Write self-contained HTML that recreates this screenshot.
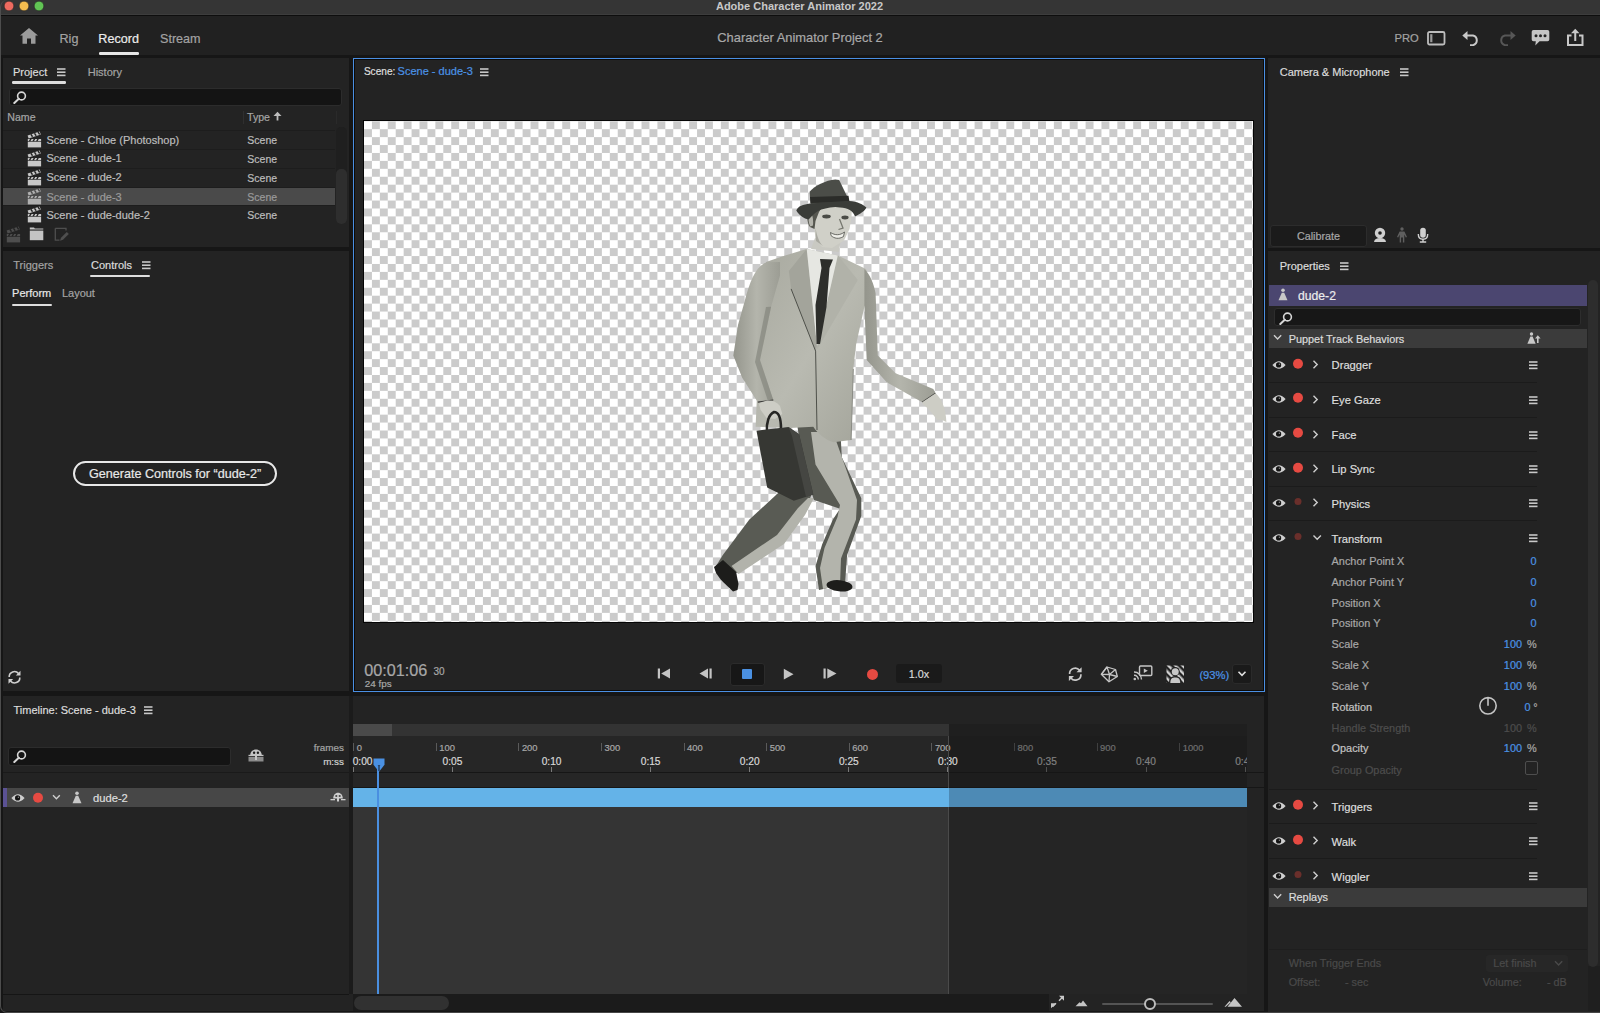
<!DOCTYPE html><html><head><meta charset="utf-8"><style>
html,body{margin:0;padding:0;}
body{width:1600px;height:1013px;overflow:hidden;position:relative;background:#161616;font-family:"Liberation Sans",sans-serif;}
.t{position:absolute;white-space:pre;-webkit-text-stroke:0.2px currentColor;}
.r{position:absolute;}
</style></head><body><div class="r" style="left:0px;top:0px;width:1600.00px;height:1013.00px;background:#161616;"></div><div class="r" style="left:0px;top:0px;width:1600.00px;height:15.00px;background:#353535;"></div><div class="r" style="left:0px;top:14px;width:1600.00px;height:1.00px;background:#3d3d3d;"></div><div class="r" style="left:0px;top:15px;width:1600.00px;height:1.00px;background:#0e0e0e;"></div><svg class="r" style="left:3.3000000000000007px;top:0.3px;" width="12" height="12" viewBox="0 0 12 12"><circle cx="6" cy="6" r="4.8" fill="#ee6a5f" stroke="#1f1f1f" stroke-width="0.5"/></svg><svg class="r" style="left:18.3px;top:0.3px;" width="12" height="12" viewBox="0 0 12 12"><circle cx="6" cy="6" r="4.8" fill="#f5bd4f" stroke="#1f1f1f" stroke-width="0.5"/></svg><svg class="r" style="left:33.3px;top:0.3px;" width="12" height="12" viewBox="0 0 12 12"><circle cx="6" cy="6" r="4.8" fill="#61c454" stroke="#1f1f1f" stroke-width="0.5"/></svg><div class="t" style="left:799.50px;top:0.79px;font-size:11px;line-height:11px;color:#c8c8c8;font-weight:700;transform:translateX(-50%);-webkit-text-stroke:0;">Adobe Character Animator 2022</div><div class="r" style="left:1px;top:16px;width:1599.00px;height:39.00px;background:#212121;"></div><svg class="r" style="left:19px;top:27px;" width="20" height="18" viewBox="0 0 20 18"><path d="M1 8.5 L10 1 L19 8.5 L16.5 8.5 L16.5 16.8 L12 16.8 L12 11.5 L8 11.5 L8 16.8 L3.5 16.8 L3.5 8.5 Z" fill="#9b9b9b"/></svg><div class="t" style="left:59.50px;top:33.33px;font-size:12.6px;line-height:12.6px;color:#a3a3a3;">Rig</div><div class="t" style="left:98.30px;top:33.33px;font-size:12.6px;line-height:12.6px;color:#ececec;">Record</div><div class="r" style="left:99px;top:52px;width:40.00px;height:2.50px;background:#e6e6e6;border-radius:1.2px;"></div><div class="t" style="left:160.00px;top:33.33px;font-size:12.6px;line-height:12.6px;color:#a3a3a3;">Stream</div><div class="t" style="left:800.00px;top:32.18px;font-size:12.9px;line-height:12.9px;color:#a9a9a9;transform:translateX(-50%);">Character Animator Project 2</div><div class="t" style="left:1394.50px;top:32.72px;font-size:11.2px;line-height:11.2px;color:#a3a3a3;">PRO</div><svg class="r" style="left:1427px;top:31px;" width="19" height="15" viewBox="0 0 19 15"><rect x="1" y="1" width="16.5" height="12.5" rx="1.5" fill="none" stroke="#bdbdbd" stroke-width="1.8"/><rect x="3.2" y="3.2" width="2.2" height="8" fill="#9a9a9a"/></svg><svg class="r" style="left:1461px;top:30px;" width="21" height="16" viewBox="0 0 21 16"><path d="M3 5.5 H12 A5 5 0 0 1 12 15.2 H9" fill="none" stroke="#c8c8c8" stroke-width="2"/><path d="M1.3 5.5 L6.5 1 L6.5 10 Z" fill="#c8c8c8"/></svg><svg class="r" style="left:1496px;top:30px;" width="21" height="16" viewBox="0 0 21 16"><path d="M18 5.5 H9 A5 5 0 0 0 9 15.2 H12" fill="none" stroke="#575757" stroke-width="2"/><path d="M19.7 5.5 L14.5 1 L14.5 10 Z" fill="#575757"/></svg><svg class="r" style="left:1531px;top:29px;" width="19" height="18" viewBox="0 0 19 18"><path d="M2.5 1 H16.5 A1.8 1.8 0 0 1 18.3 2.8 V10.5 A1.8 1.8 0 0 1 16.5 12.3 H8.5 L4.3 16.5 L4.8 12.3 H2.5 A1.8 1.8 0 0 1 0.7 10.5 V2.8 A1.8 1.8 0 0 1 2.5 1 Z" fill="#c4c4c4"/><circle cx="5" cy="6.7" r="1.5" fill="#222"/><circle cx="9.5" cy="6.7" r="1.5" fill="#222"/><circle cx="14" cy="6.7" r="1.5" fill="#222"/></svg><svg class="r" style="left:1566px;top:28px;" width="19" height="19" viewBox="0 0 19 19"><path d="M5.5 7.5 H2 V17 H16.5 V7.5 H13" fill="none" stroke="#c8c8c8" stroke-width="2"/><path d="M9.25 13 V3" stroke="#c8c8c8" stroke-width="2"/><path d="M5 5.2 L9.25 0.8 L13.5 5.2 Z" fill="#c8c8c8"/></svg><div class="r" style="left:3px;top:57.5px;width:346.00px;height:189.50px;background:#232323;"></div><div class="r" style="left:3px;top:251px;width:346.00px;height:439.50px;background:#232323;"></div><div class="r" style="left:353px;top:58px;width:912.00px;height:634.00px;background:#232323;"></div><div class="r" style="left:1268px;top:58px;width:332.00px;height:190.00px;background:#232323;"></div><div class="r" style="left:1268px;top:251px;width:332.00px;height:761.00px;background:#232323;"></div><div class="r" style="left:3px;top:695.5px;width:1261.00px;height:315.50px;background:#232323;"></div><div class="r" style="left:0;top:0;width:1601px;height:1013px;box-sizing:border-box;border-left:1px solid #4d4d4d;border-bottom:1px solid #474747;border-radius:7px 0 0 7px;"></div><div class="t" style="left:13.00px;top:66.69px;font-size:11px;line-height:11px;color:#dcdcdc;">Project</div><svg class="r" style="left:57.4px;top:67.6px;" width="10" height="9" viewBox="0 0 10 9"><g fill="#c8c8c8"><rect x="0" y="0.2" width="8.5" height="1.6"/><rect x="0" y="3.4" width="8.5" height="1.6"/><rect x="0" y="6.6" width="8.5" height="1.6"/></g></svg><div class="r" style="left:12px;top:81px;width:54.00px;height:2.50px;background:#dedede;border-radius:1.2px;"></div><div class="t" style="left:87.70px;top:66.69px;font-size:11px;line-height:11px;color:#a3a3a3;">History</div><div class="r" style="left:8.5px;top:87.6px;width:333.00px;height:18.60px;background:#141414;border:1px solid #2c2c2c;border-radius:3px;box-sizing:border-box;"></div><svg class="r" style="left:13px;top:90.5px;" width="14" height="13" viewBox="0 0 14 13"><circle cx="8.5" cy="5" r="3.9" fill="none" stroke="#d6d6d6" stroke-width="1.6"/><path d="M5.8 7.8 L1.3 12" stroke="#d6d6d6" stroke-width="2" stroke-linecap="round"/></svg><div class="t" style="left:7.30px;top:112.32px;font-size:10.6px;line-height:10.6px;color:#a5a5a5;">Name</div><div class="r" style="left:243px;top:111px;width:1.00px;height:13.00px;background:#2f2f2f;"></div><div class="t" style="left:247.00px;top:112.32px;font-size:10.6px;line-height:10.6px;color:#a5a5a5;">Type</div><svg class="r" style="left:271.5px;top:111px;" width="12" height="10" viewBox="0 0 12 10"><path d="M5.5 9.5 V3" stroke="#bdbdbd" stroke-width="1.8"/><path d="M1.5 5 L5.5 0.8 L9.5 5 Z" fill="#bdbdbd"/></svg><div class="r" style="left:336px;top:111px;width:1.00px;height:13.00px;background:#2a2a2a;"></div><div class="r" style="left:3px;top:130.0px;width:332.00px;height:1.00px;background:#1d1d1d;"></div><svg class="r" style="left:26.5px;top:131.3px;" width="16" height="17" viewBox="0 0 16 17"><g fill="#c8c8c8"><path d="M0.6 4.6 L12.6 0.6 L13.9 3.4 L1.6 7.4 Z"/><rect x="0.8" y="8" width="13.3" height="2.2"/><rect x="0.8" y="10.8" width="13.3" height="5.6"/></g><g fill="#232323"><path d="M3.2 3.6 L4.6 3.1 L6.2 5.6 L4.8 6.1 Z"/><path d="M6.8 2.4 L8.2 1.9 L9.8 4.4 L8.4 4.9 Z"/><path d="M10.4 1.2 L11.8 0.7 L13.4 3.2 L12 3.7 Z"/><path d="M3 8 L4.6 8 L3.4 10.2 L1.8 10.2 Z"/><path d="M6.6 8 L8.2 8 L7 10.2 L5.4 10.2 Z"/><path d="M10.2 8 L11.8 8 L10.6 10.2 L9 10.2 Z"/></g></svg><div class="t" style="left:46.50px;top:134.79px;font-size:11px;line-height:11px;color:#bdbdbd;">Scene - Chloe (Photoshop)</div><div class="t" style="left:247.30px;top:135.21px;font-size:10.5px;line-height:10.5px;color:#bdbdbd;">Scene</div><div class="r" style="left:3px;top:148.5px;width:332.00px;height:1.00px;background:#1d1d1d;"></div><svg class="r" style="left:26.5px;top:149.8px;" width="16" height="17" viewBox="0 0 16 17"><g fill="#c8c8c8"><path d="M0.6 4.6 L12.6 0.6 L13.9 3.4 L1.6 7.4 Z"/><rect x="0.8" y="8" width="13.3" height="2.2"/><rect x="0.8" y="10.8" width="13.3" height="5.6"/></g><g fill="#232323"><path d="M3.2 3.6 L4.6 3.1 L6.2 5.6 L4.8 6.1 Z"/><path d="M6.8 2.4 L8.2 1.9 L9.8 4.4 L8.4 4.9 Z"/><path d="M10.4 1.2 L11.8 0.7 L13.4 3.2 L12 3.7 Z"/><path d="M3 8 L4.6 8 L3.4 10.2 L1.8 10.2 Z"/><path d="M6.6 8 L8.2 8 L7 10.2 L5.4 10.2 Z"/><path d="M10.2 8 L11.8 8 L10.6 10.2 L9 10.2 Z"/></g></svg><div class="t" style="left:46.50px;top:153.29px;font-size:11px;line-height:11px;color:#bdbdbd;">Scene - dude-1</div><div class="t" style="left:247.30px;top:153.71px;font-size:10.5px;line-height:10.5px;color:#bdbdbd;">Scene</div><div class="r" style="left:3px;top:167.5px;width:332.00px;height:1.00px;background:#1d1d1d;"></div><svg class="r" style="left:26.5px;top:168.8px;" width="16" height="17" viewBox="0 0 16 17"><g fill="#c8c8c8"><path d="M0.6 4.6 L12.6 0.6 L13.9 3.4 L1.6 7.4 Z"/><rect x="0.8" y="8" width="13.3" height="2.2"/><rect x="0.8" y="10.8" width="13.3" height="5.6"/></g><g fill="#232323"><path d="M3.2 3.6 L4.6 3.1 L6.2 5.6 L4.8 6.1 Z"/><path d="M6.8 2.4 L8.2 1.9 L9.8 4.4 L8.4 4.9 Z"/><path d="M10.4 1.2 L11.8 0.7 L13.4 3.2 L12 3.7 Z"/><path d="M3 8 L4.6 8 L3.4 10.2 L1.8 10.2 Z"/><path d="M6.6 8 L8.2 8 L7 10.2 L5.4 10.2 Z"/><path d="M10.2 8 L11.8 8 L10.6 10.2 L9 10.2 Z"/></g></svg><div class="t" style="left:46.50px;top:172.29px;font-size:11px;line-height:11px;color:#bdbdbd;">Scene - dude-2</div><div class="t" style="left:247.30px;top:172.71px;font-size:10.5px;line-height:10.5px;color:#bdbdbd;">Scene</div><div class="r" style="left:3px;top:187.3px;width:332.00px;height:18.00px;background:#4a4a4a;"></div><div class="r" style="left:3px;top:186.8px;width:332.00px;height:1.00px;background:#1d1d1d;"></div><svg class="r" style="left:26.5px;top:188.10000000000002px;" width="16" height="17" viewBox="0 0 16 17"><g fill="#b0b0b0"><path d="M0.6 4.6 L12.6 0.6 L13.9 3.4 L1.6 7.4 Z"/><rect x="0.8" y="8" width="13.3" height="2.2"/><rect x="0.8" y="10.8" width="13.3" height="5.6"/></g><g fill="#4a4a4a"><path d="M3.2 3.6 L4.6 3.1 L6.2 5.6 L4.8 6.1 Z"/><path d="M6.8 2.4 L8.2 1.9 L9.8 4.4 L8.4 4.9 Z"/><path d="M10.4 1.2 L11.8 0.7 L13.4 3.2 L12 3.7 Z"/><path d="M3 8 L4.6 8 L3.4 10.2 L1.8 10.2 Z"/><path d="M6.6 8 L8.2 8 L7 10.2 L5.4 10.2 Z"/><path d="M10.2 8 L11.8 8 L10.6 10.2 L9 10.2 Z"/></g></svg><div class="t" style="left:46.50px;top:191.59px;font-size:11px;line-height:11px;color:#9a9a9a;">Scene - dude-3</div><div class="t" style="left:247.30px;top:192.01px;font-size:10.5px;line-height:10.5px;color:#9a9a9a;">Scene</div><div class="r" style="left:3px;top:204.8px;width:332.00px;height:1.00px;background:#1d1d1d;"></div><svg class="r" style="left:26.5px;top:206.10000000000002px;" width="16" height="17" viewBox="0 0 16 17"><g fill="#c8c8c8"><path d="M0.6 4.6 L12.6 0.6 L13.9 3.4 L1.6 7.4 Z"/><rect x="0.8" y="8" width="13.3" height="2.2"/><rect x="0.8" y="10.8" width="13.3" height="5.6"/></g><g fill="#232323"><path d="M3.2 3.6 L4.6 3.1 L6.2 5.6 L4.8 6.1 Z"/><path d="M6.8 2.4 L8.2 1.9 L9.8 4.4 L8.4 4.9 Z"/><path d="M10.4 1.2 L11.8 0.7 L13.4 3.2 L12 3.7 Z"/><path d="M3 8 L4.6 8 L3.4 10.2 L1.8 10.2 Z"/><path d="M6.6 8 L8.2 8 L7 10.2 L5.4 10.2 Z"/><path d="M10.2 8 L11.8 8 L10.6 10.2 L9 10.2 Z"/></g></svg><div class="t" style="left:46.50px;top:209.59px;font-size:11px;line-height:11px;color:#bdbdbd;">Scene - dude-dude-2</div><div class="t" style="left:247.30px;top:210.01px;font-size:10.5px;line-height:10.5px;color:#bdbdbd;">Scene</div><div class="r" style="left:336px;top:127px;width:10.50px;height:96.50px;background:#1f1f1f;border-radius:5px;"></div><div class="r" style="left:336px;top:168.5px;width:10.50px;height:55.00px;background:#2e2e2e;border-radius:5px;"></div><svg class="r" style="left:5.5px;top:226.3px;" width="16" height="17" viewBox="0 0 16 17"><g fill="#4e4e4e"><path d="M0.6 4.6 L12.6 0.6 L13.9 3.4 L1.6 7.4 Z"/><rect x="0.8" y="8" width="13.3" height="2.2"/><rect x="0.8" y="10.8" width="13.3" height="5.6"/></g><g fill="#232323"><path d="M3.2 3.6 L4.6 3.1 L6.2 5.6 L4.8 6.1 Z"/><path d="M6.8 2.4 L8.2 1.9 L9.8 4.4 L8.4 4.9 Z"/><path d="M10.4 1.2 L11.8 0.7 L13.4 3.2 L12 3.7 Z"/><path d="M3 8 L4.6 8 L3.4 10.2 L1.8 10.2 Z"/><path d="M6.6 8 L8.2 8 L7 10.2 L5.4 10.2 Z"/><path d="M10.2 8 L11.8 8 L10.6 10.2 L9 10.2 Z"/></g></svg><svg class="r" style="left:29px;top:226px;" width="16" height="15" viewBox="0 0 16 15"><path d="M0.8 1.5 H5 L5.8 2.6 H14.3 V3.6 H0.8 Z" fill="#c4c4c4"/><rect x="0.8" y="4.6" width="13.5" height="9.6" fill="#c4c4c4"/></svg><svg class="r" style="left:54px;top:227px;" width="16" height="15" viewBox="0 0 16 15"><path d="M1.3 1.3 H12 V3.5 M1.3 1.3 V13.2 H5.5" fill="none" stroke="#4f4f4f" stroke-width="1.3"/><path d="M6 13.8 L7 10.8 L12.8 5 L14.8 7 L9 12.8 Z" fill="#4f4f4f"/></svg><div class="t" style="left:13.30px;top:259.79px;font-size:11px;line-height:11px;color:#a3a3a3;">Triggers</div><div class="t" style="left:91.00px;top:259.79px;font-size:11px;line-height:11px;color:#dcdcdc;">Controls</div><svg class="r" style="left:141.5px;top:260.7px;" width="10" height="9" viewBox="0 0 10 9"><g fill="#c8c8c8"><rect x="0" y="0.2" width="8.5" height="1.6"/><rect x="0" y="3.4" width="8.5" height="1.6"/><rect x="0" y="6.6" width="8.5" height="1.6"/></g></svg><div class="r" style="left:90px;top:274.5px;width:60.00px;height:2.50px;background:#dedede;border-radius:1.2px;"></div><div class="t" style="left:12.10px;top:288.49px;font-size:11px;line-height:11px;color:#e8e8e8;">Perform</div><div class="r" style="left:11.8px;top:303.5px;width:39.90px;height:2.20px;background:#dedede;border-radius:1px;"></div><div class="t" style="left:61.90px;top:288.49px;font-size:11px;line-height:11px;color:#a3a3a3;">Layout</div><div class="r" style="left:73px;top:461px;width:204.00px;height:24.50px;background:transparent;border:2px solid #e8e8e8;border-radius:13px;box-sizing:border-box;"></div><div class="t" style="left:175.00px;top:467.83px;font-size:12.6px;line-height:12.6px;color:#e8e8e8;transform:translateX(-50%);">Generate Controls for “dude-2”</div><svg class="r" style="left:7px;top:670px;" width="15" height="15" viewBox="0 0 15 15"><path d="M2.2 7 A5.2 5.2 0 0 1 11.5 3.6" fill="none" stroke="#cfcfcf" stroke-width="1.6"/><path d="M12.8 7.5 A5.2 5.2 0 0 1 3.5 10.9" fill="none" stroke="#cfcfcf" stroke-width="1.6"/><path d="M13.5 0.8 V5.5 H8.8 Z" fill="#cfcfcf"/><path d="M1.5 13.8 V9.1 H6.2 Z" fill="#cfcfcf"/></svg><div class="r" style="left:352.6px;top:57.6px;width:912.8px;height:634.6px;box-sizing:border-box;border:1.6px solid #4a8fe3;"></div><div class="r" style="left:354px;top:59px;width:910px;height:632px;box-sizing:border-box;border:1px solid #0c0a08;"></div><div class="t" style="left:363.90px;top:67.25px;font-size:10.1px;line-height:10.1px;color:#dedede;">Scene:</div><div class="t" style="left:397.60px;top:66.49px;font-size:11px;line-height:11px;color:#4b93e6;">Scene - dude-3</div><svg class="r" style="left:479.6px;top:67.6px;" width="10" height="9" viewBox="0 0 10 9"><g fill="#c8c8c8"><rect x="0" y="0.2" width="8.5" height="1.6"/><rect x="0" y="3.4" width="8.5" height="1.6"/><rect x="0" y="6.6" width="8.5" height="1.6"/></g></svg><div class="r" style="left:363px;top:120px;width:891.00px;height:502.60px;background:#050505;"></div><div class="r" style="left:364px;top:121px;width:889px;height:500.7px;background:conic-gradient(#cbcbcb 25%,#fff 0 50%,#cbcbcb 0 75%,#fff 0);background-size:15.86px 15.86px;background-position:0 0.25px;"></div><div class="t" style="left:364.20px;top:661.78px;font-size:16.2px;line-height:16.2px;color:#a8a8a8;">00:01:06</div><div class="t" style="left:433.50px;top:667.03px;font-size:10px;line-height:10px;color:#a8a8a8;">30</div><div class="t" style="left:364.80px;top:679.12px;font-size:9.9px;line-height:9.9px;color:#a8a8a8;">24 fps</div><svg class="r" style="left:657px;top:668px;" width="14" height="12" viewBox="0 0 14 12"><rect x="0.8" y="0.5" width="2.2" height="10" fill="#c4c4c4"/><path d="M13 0.5 V10.5 L4.2 5.5 Z" fill="#c4c4c4"/></svg><svg class="r" style="left:699px;top:668px;" width="14" height="12" viewBox="0 0 14 12"><rect x="10.5" y="0.5" width="2.2" height="10" fill="#c4c4c4"/><path d="M9 0.5 V10.5 L0.5 5.5 Z" fill="#c4c4c4"/></svg><div class="r" style="left:730px;top:662.5px;width:35.00px;height:23.50px;background:#171717;border:1px solid #2b2b2b;border-radius:3px;box-sizing:border-box;"></div><div class="r" style="left:742px;top:669px;width:10.00px;height:10.00px;background:#4a90e2;border-radius:1px;"></div><svg class="r" style="left:783px;top:668px;" width="12" height="13" viewBox="0 0 12 13"><path d="M0.8 0.8 V11.5 L10.5 6.15 Z" fill="#c4c4c4"/></svg><svg class="r" style="left:823px;top:668px;" width="15" height="12" viewBox="0 0 15 12"><rect x="0.5" y="0.5" width="2.2" height="10" fill="#c4c4c4"/><path d="M4.3 0.5 V10.5 L13.5 5.5 Z" fill="#c4c4c4"/></svg><svg class="r" style="left:866px;top:667.5px;" width="13" height="13" viewBox="0 0 13 13"><circle cx="6.5" cy="6.4" r="5.5" fill="#e64a42"/></svg><div class="r" style="left:896px;top:664.2px;width:46.00px;height:19.30px;background:#1a1a1a;border-radius:3px;"></div><div class="t" style="left:919.00px;top:669.36px;font-size:10.8px;line-height:10.8px;color:#d8d8d8;transform:translateX(-50%);">1.0x</div><svg class="r" style="left:1067px;top:665.5px;" width="17" height="16" viewBox="0 0 17 16"><path d="M2.6 8 A5.6 5.6 0 0 1 12.6 4.3" fill="none" stroke="#cacaca" stroke-width="1.7"/><path d="M13.9 8.3 A5.6 5.6 0 0 1 3.9 12" fill="none" stroke="#cacaca" stroke-width="1.7"/><path d="M14.6 1.2 V6.3 H9.5 Z" fill="#cacaca"/><path d="M1.9 15 V9.9 H7 Z" fill="#cacaca"/></svg><svg class="r" style="left:1100px;top:665.5px;" width="19" height="17" viewBox="0 0 19 17"><g fill="none" stroke="#c6c6c6" stroke-width="1.3" stroke-linejoin="round"><path d="M7 1 L15.5 3.5 L17.3 10.5 L9 15.8 L1.3 8.3 Z"/><path d="M7 1 L9.5 8.5 L17.3 10.5 M9.5 8.5 L1.3 8.3 M9.5 8.5 L9 15.8 M7 1 L1.3 8.3 M15.5 3.5 L9.5 8.5"/></g></svg><svg class="r" style="left:1133px;top:665px;" width="20" height="16" viewBox="0 0 20 16"><rect x="6.5" y="1" width="12.3" height="9.5" rx="1" fill="none" stroke="#c6c6c6" stroke-width="1.4"/><path d="M10.8 3.5 V8 L14.8 5.75 Z" fill="#c6c6c6"/><circle cx="1.8" cy="14" r="1.3" fill="#c6c6c6"/><path d="M1 10.3 A4 4 0 0 1 5.3 14.5 M1 7 A7.3 7.3 0 0 1 8.5 14.5" fill="none" stroke="#c6c6c6" stroke-width="1.4"/></svg><svg class="r" style="left:1166px;top:664.5px;" width="19" height="18" viewBox="0 0 19 18"><defs><pattern id="st" width="5" height="5" patternUnits="userSpaceOnUse" patternTransform="rotate(-45)"><rect width="2.5" height="5" fill="#d0d0d0"/></pattern></defs><rect x="0.5" y="0.5" width="17.5" height="17.5" fill="url(#st)"/><path d="M3 18 C3 12.5 5.5 11.3 9.25 11.3 C13 11.3 15.5 12.5 15.5 18 Z" fill="#232323"/><circle cx="9.25" cy="6.5" r="4.5" fill="#232323"/><path d="M4.3 18 C4.3 13.5 6.3 12.5 9.25 12.5 C12.2 12.5 14.2 13.5 14.2 18 Z" fill="#c8c8c8"/><circle cx="9.25" cy="6.8" r="3.5" fill="#c8c8c8"/></svg><div class="t" style="left:1199.40px;top:670.32px;font-size:11.2px;line-height:11.2px;color:#4b93e6;">(93%)</div><div class="r" style="left:1232.2px;top:664px;width:19.80px;height:20.00px;background:#1a1a1a;border:1px solid #2a2a2a;border-radius:3px;box-sizing:border-box;"></div><svg class="r" style="left:1237px;top:669px;" width="10" height="9" viewBox="0 0 10 9"><path d="M1.5 2.8 L5 6.3 L8.5 2.8" fill="none" stroke="#e0e0e0" stroke-width="1.6"/></svg><svg class="r" style="left:364px;top:121px;" width="889" height="500" viewBox="364 121 889 500">
<defs>
<linearGradient id="jk" x1="0" y1="0" x2="1" y2="1"><stop offset="0" stop-color="#a8a99f"/><stop offset="0.5" stop-color="#b9bab1"/><stop offset="1" stop-color="#a2a399"/></linearGradient>
<linearGradient id="arm" x1="0" y1="0" x2="1" y2="0"><stop offset="0" stop-color="#94958c"/><stop offset="0.5" stop-color="#b4b5ac"/><stop offset="1" stop-color="#9c9d94"/></linearGradient>
</defs>
<!-- back leg -->
<path d="M781.4,490 L813.3,490 L804.5,512.4 L783.2,540.8 L737,573 L716,566 L722.8,555 L749.4,519.5 Z" fill="#595b54"/>
<path d="M808,498 L814,498 L805,515 L784,544 L738.5,574 L731.5,566 L777,535 L798,508 Z" fill="#b2b3ab"/>
<path d="M714,567 L723,560 L736,572 L738.5,584 L737.5,590 L733,591.5 L721,580 L716,573 Z" fill="#1d1d1b"/>
<!-- front leg -->
<path d="M797,424 L840,424 L841.8,457.3 L861.3,498.2 L861.3,515.9 L847.1,555 L845,584 L819,590 L815.5,566 L822.2,544.3 L832.9,519.5 L840,508.8 L814,499.9 L805,473.3 Z" fill="#585a53"/>
<path d="M811,432 L833,432 L857,499.9 L856,519.5 L841,558.5 L840,585 L823,589 L820,568 L824.5,547.9 L837.5,517 L840,505 L815.5,464.4 Z" fill="#b3b4ac"/>
<ellipse cx="839.5" cy="585.8" rx="13" ry="5.6" transform="rotate(6 839.5 585.8)" fill="#1d1d1b"/>

<!-- jacket body -->
<path d="M806.7,248.9 L837.8,255.6 L866,269 L873,290 L864.4,306.7 L856,345 L853.3,368.9 L851.1,440 L833.3,442.2 C826,440 818,434 813.3,426.7 L790,428 L755.6,426.7 L757,395 L757.5,358.6 L769,285.5 L766,262 L784.3,255.8 Z" fill="url(#jk)"/>
<!-- lapels -->
<path d="M806.7,248.9 L788.9,271.1 L791.1,288.9 L815.6,351.1 L817,345 Z" fill="#a3a49b"/>
<path d="M837.8,255.6 L857.8,280 L816.5,350.5 L817,345 Z" fill="#b1b2a9"/>
<path d="M791.1,288.9 L815.6,351.1 L817,430" fill="none" stroke="#4e504a" stroke-width="1"/>
<path d="M853.3,368.9 L851.1,440" fill="none" stroke="#8a8b84" stroke-width="1"/>
<!-- shirt & tie -->
<path d="M806.7,248.9 L837.8,255.6 L817,346 Z" fill="#e6e7e2"/>
<path d="M820,259 L833,259.5 L829.5,268 L826.5,307 L820,344 L816.5,344 L815.5,305 L821.5,268 Z" fill="#2d2e2b"/>
<!-- left arm -->
<path d="M766.7,262.2 L780,262 L780,275.6 L771.1,306.7 L760,360 L773.3,400 L757.8,402.2 L742.2,377.8 L733.3,355.6 L738,325 L744.4,302.2 C750,280 756,266 766.7,262.2 Z" fill="url(#arm)"/>
<path d="M760,360 L773.3,400 L768,401 L755,362 L766,307 L771.1,306.7 Z" fill="#85867e" opacity="0.7"/>
<!-- right arm -->
<path d="M864.4,268.9 C870,274 874,284 875.6,293.3 L877.8,355.6 L895.6,373.3 L933.3,388.9 L935.6,393.3 L922.2,402.2 L886.7,382.2 L866.7,360 L864.4,306.7 Z" fill="url(#arm)"/>
<path d="M935.6,393.3 L922.2,402.2" stroke="#3a3a38" stroke-width="1.2"/>
<path d="M757.8,402.2 L773.3,400" stroke="#3a3a38" stroke-width="1.2"/>
<!-- neck & face -->
<path d="M815,238 L841,238 L839,252 L811,249 Z" fill="#c9c9c2"/>
<path d="M810,204 L852,203 L851.5,217 L849.5,229 L844,240.5 L832,248 L822,247 L815.5,240 L814.5,229 L810,227 C806.5,223 806.5,212 810,204 Z" fill="#d0d0c8"/>
<path d="M809,204 L824,204 L819,212 L815.5,221 L814.5,229 L810,227 C806.5,223 806.5,212 809,204 Z" fill="#55564f"/>
<path d="M809.8,213.5 C812.5,213.5 813.5,219 813,225.5 L810.2,226.5 C808,222 808,217 809.8,213.5 Z" fill="#b4b4ac"/>
<path d="M815.5,228 C817,236 819,242 823,246 L816,241 Z" fill="#a9a9a1"/>
<ellipse cx="826.5" cy="216.5" rx="4.3" ry="1.9" fill="#4a4b46"/>
<ellipse cx="845" cy="217.5" rx="3.6" ry="1.9" fill="#4a4b46"/>
<path d="M839.5,219 L843,228 L838.5,229.5" fill="none" stroke="#77786f" stroke-width="1.3"/>
<path d="M830.5,232.5 C835,235.5 840,235.5 844.5,232 L843.5,236.5 C839,239.5 834,238.5 831,235.5 Z" fill="#efefe9" stroke="#4d4e49" stroke-width="0.8"/>
<!-- hat -->
<path d="M809.6,191.7 C814,186 826,180 835.3,179.4 L839.2,179.9 L848.1,198.6 L849.1,203 L810.6,204 Z" fill="#4b4d48"/>
<path d="M810,197 L848.5,195.7 L849.5,202 L810.5,203 Z" fill="#2b2c29"/>
<path d="M796.3,210.5 C798,206 803,204.5 810,203.5 L845,201 C853,200.8 860,202 866.4,207.5 C865,211 860,214 855,216.4 C853,211 848,208 840,207.5 L835.3,207 C828,207.5 822,209 818,211 C814,213.5 811,217 808.6,219.4 C804,219 799,215 796.3,210.5 Z" fill="#3a3c38"/>
<!-- hands -->
<path d="M759,404 C766,399 774,399 780,406 L782.3,414 L775,419 L766.5,417.9 L760.6,410 Z" fill="#cdcdc5"/>
<path d="M922.2,402.2 L935.6,393.3 C941,398 946,408 946.4,422 L942,420 L937,419.8 C933,414 928,408 922.5,404 Z" fill="#cdcdc5"/>
<!-- briefcase -->
<path d="M767,432 C766,423 769,414 774,412 C779,412 781,420 781,429" fill="none" stroke="#262624" stroke-width="2.6"/>
<path d="M756.5,430.7 L788.5,427.1 L799.1,434.2 L813.3,494.6 L793.8,500.8 L767.2,487.5 Z" fill="#363733"/>
<path d="M788.5,427.1 L799.1,434.2 L813.3,494.6 L806,497 L792,436 Z" fill="#454642"/>
</svg><div class="t" style="left:13.50px;top:704.89px;font-size:11px;line-height:11px;color:#dcdcdc;">Timeline: Scene - dude-3</div><svg class="r" style="left:143.6px;top:705.8px;" width="10" height="9" viewBox="0 0 10 9"><g fill="#c8c8c8"><rect x="0" y="0.2" width="8.5" height="1.6"/><rect x="0" y="3.4" width="8.5" height="1.6"/><rect x="0" y="6.6" width="8.5" height="1.6"/></g></svg><div class="r" style="left:8.3px;top:746.5px;width:222.70px;height:19.50px;background:#141414;border:1px solid #2c2c2c;border-radius:3px;box-sizing:border-box;"></div><svg class="r" style="left:12.5px;top:749.5px;" width="14" height="13" viewBox="0 0 14 13"><circle cx="8.5" cy="5" r="3.9" fill="none" stroke="#d6d6d6" stroke-width="1.6"/><path d="M5.8 7.8 L1.3 12" stroke="#d6d6d6" stroke-width="2" stroke-linecap="round"/></svg><svg class="r" style="left:248px;top:749.2px;" width="16" height="13" viewBox="0 0 16 13"><path d="M2.2 6.6 C2.2 2.8 4.8 0.6 8 0.6 C11.2 0.6 13.8 2.8 13.8 6.6 Z" fill="#c4c4c4"/><rect x="0.5" y="5.8" width="15" height="1.3" fill="#c4c4c4"/><circle cx="6.1" cy="3.7" r="1.2" fill="#1e1e1e"/><circle cx="9.9" cy="3.7" r="1.2" fill="#1e1e1e"/><rect x="0.5" y="7.9" width="15" height="4.6" fill="#8c8c8c"/><rect x="7" y="4.8" width="2" height="6.2" fill="#c4c4c4"/></svg><div class="t" style="left:344.00px;top:742.72px;font-size:9.9px;line-height:9.9px;color:#a5a5a5;transform:translateX(-100%);">frames</div><div class="t" style="left:344.00px;top:756.82px;font-size:9.9px;line-height:9.9px;color:#cfcfcf;transform:translateX(-100%);">m:ss</div><div class="r" style="left:3px;top:772px;width:346.00px;height:1.00px;background:#1a1a1a;"></div><div class="r" style="left:3px;top:788px;width:346.00px;height:19.00px;background:#474747;"></div><div class="r" style="left:2.5px;top:788px;width:4.50px;height:19.00px;background:#5b5294;"></div><svg class="r" style="left:10.5px;top:793px;" width="15" height="11" viewBox="0 0 15 11"><path d="M0.4 5 Q7 -2.6 13.6 5 Q7 12.6 0.4 5 Z" fill="#cfcfcf"/><circle cx="6.6" cy="4.9" r="2.6" fill="#141414"/><circle cx="7.4" cy="4.2" r="0.7" fill="#cfcfcf" opacity="0.6"/></svg><svg class="r" style="left:32px;top:792px;" width="12" height="12" viewBox="0 0 12 12"><circle cx="6" cy="5.8" r="5" fill="#e64a42"/></svg><svg class="r" style="left:51.5px;top:794px;" width="10" height="7" viewBox="0 0 10 7"><path d="M1 1.3 L4.4 4.7 L7.8 1.3" fill="none" stroke="#cfcfcf" stroke-width="1.4"/></svg><svg class="r" style="left:72px;top:790.5px;" width="11" height="13" viewBox="0 0 11 13"><g transform="scale(1.0)" fill="#c8c8c8"><circle cx="5" cy="2.2" r="1.8"/><path d="M3.8 4.8 H6.2 L9.5 12.3 H0.5 Z"/></g></svg><div class="t" style="left:93.00px;top:793.32px;font-size:11.2px;line-height:11.2px;color:#dedede;">dude-2</div><svg class="r" style="left:329.5px;top:791.5px;" width="16" height="13" viewBox="0 0 16 13"><path d="M3.2 6.6 C3.2 3 5.3 0.8 8 0.8 C10.7 0.8 12.8 3 12.8 6.6 Z" fill="#cfcfcf"/><rect x="0.5" y="7" width="4.5" height="1.3" fill="#cfcfcf"/><rect x="11" y="7" width="4.5" height="1.3" fill="#cfcfcf"/><circle cx="6.3" cy="4" r="1.1" fill="#474747"/><circle cx="9.7" cy="4" r="1.1" fill="#474747"/><rect x="7" y="5" width="2" height="4.5" fill="#cfcfcf"/></svg><div class="r" style="left:349px;top:695.5px;width:4.00px;height:315.50px;background:#1b1b1b;"></div><div class="r" style="left:353px;top:773px;width:911.00px;height:238.00px;background:#232323;"></div><div class="r" style="left:353px;top:807px;width:595.50px;height:187.00px;background:#343434;"></div><div class="r" style="left:948.5px;top:807px;width:298.00px;height:187.00px;background:#252525;"></div><div class="r" style="left:353px;top:723.6px;width:595.50px;height:12.40px;background:#333333;"></div><div class="r" style="left:353px;top:723.6px;width:38.70px;height:12.40px;background:#4a4a4a;"></div><div class="r" style="left:948.5px;top:723.6px;width:298.00px;height:12.40px;background:#1f1f1f;"></div><div class="r" style="left:353px;top:736px;width:595.50px;height:36.00px;background:#262626;"></div><div class="r" style="left:948.5px;top:736px;width:298.00px;height:36.00px;background:#1d1d1d;"></div><div class="r" style="left:353px;top:772px;width:911.00px;height:1.00px;background:#161616;"></div><div class="r" style="left:353px;top:787px;width:911.00px;height:1.00px;background:#161616;"></div><div class="r" style="left:353px;top:773px;width:595.50px;height:14.00px;background:#262626;"></div><div class="r" style="left:948.5px;top:773px;width:298.00px;height:14.00px;background:#1d1d1d;"></div><div class="r" style="left:0;top:0;width:1246.5px;height:1013px;overflow:hidden;"><div class="r" style="left:353.09999999999997px;top:743px;width:1.00px;height:8.00px;background:#5a5a5a;"></div><div class="t" style="left:356.70px;top:743.14px;font-size:9.4px;line-height:9.4px;color:#a8a8a8;">0</div><div class="r" style="left:435.7px;top:743px;width:1.00px;height:8.00px;background:#5a5a5a;"></div><div class="t" style="left:439.30px;top:743.14px;font-size:9.4px;line-height:9.4px;color:#a8a8a8;">100</div><div class="r" style="left:518.3px;top:743px;width:1.00px;height:8.00px;background:#5a5a5a;"></div><div class="t" style="left:521.90px;top:743.14px;font-size:9.4px;line-height:9.4px;color:#a8a8a8;">200</div><div class="r" style="left:600.9px;top:743px;width:1.00px;height:8.00px;background:#5a5a5a;"></div><div class="t" style="left:604.50px;top:743.14px;font-size:9.4px;line-height:9.4px;color:#a8a8a8;">300</div><div class="r" style="left:683.5px;top:743px;width:1.00px;height:8.00px;background:#5a5a5a;"></div><div class="t" style="left:687.10px;top:743.14px;font-size:9.4px;line-height:9.4px;color:#a8a8a8;">400</div><div class="r" style="left:766.1px;top:743px;width:1.00px;height:8.00px;background:#5a5a5a;"></div><div class="t" style="left:769.70px;top:743.14px;font-size:9.4px;line-height:9.4px;color:#a8a8a8;">500</div><div class="r" style="left:848.7px;top:743px;width:1.00px;height:8.00px;background:#5a5a5a;"></div><div class="t" style="left:852.30px;top:743.14px;font-size:9.4px;line-height:9.4px;color:#a8a8a8;">600</div><div class="r" style="left:931.3px;top:743px;width:1.00px;height:8.00px;background:#5a5a5a;"></div><div class="t" style="left:934.90px;top:743.14px;font-size:9.4px;line-height:9.4px;color:#a8a8a8;">700</div><div class="r" style="left:1013.9px;top:743px;width:1.00px;height:8.00px;background:#404040;"></div><div class="t" style="left:1017.50px;top:743.14px;font-size:9.4px;line-height:9.4px;color:#6e6e6e;">800</div><div class="r" style="left:1096.5px;top:743px;width:1.00px;height:8.00px;background:#404040;"></div><div class="t" style="left:1100.10px;top:743.14px;font-size:9.4px;line-height:9.4px;color:#6e6e6e;">900</div><div class="r" style="left:1179.1000000000001px;top:743px;width:1.00px;height:8.00px;background:#404040;"></div><div class="t" style="left:1182.70px;top:743.14px;font-size:9.4px;line-height:9.4px;color:#6e6e6e;">1000</div><div class="r" style="left:352.9px;top:766.5px;width:1.00px;height:5.50px;background:#7a7a7a;"></div><div class="t" style="left:352.70px;top:756.56px;font-size:10.2px;line-height:10.2px;color:#d8d8d8;">0:00</div><div class="r" style="left:451.97999999999996px;top:766.5px;width:1.00px;height:5.50px;background:#7a7a7a;"></div><div class="t" style="left:452.48px;top:756.56px;font-size:10.2px;line-height:10.2px;color:#d8d8d8;transform:translateX(-50%);">0:05</div><div class="r" style="left:551.06px;top:766.5px;width:1.00px;height:5.50px;background:#7a7a7a;"></div><div class="t" style="left:551.56px;top:756.56px;font-size:10.2px;line-height:10.2px;color:#d8d8d8;transform:translateX(-50%);">0:10</div><div class="r" style="left:650.14px;top:766.5px;width:1.00px;height:5.50px;background:#7a7a7a;"></div><div class="t" style="left:650.64px;top:756.56px;font-size:10.2px;line-height:10.2px;color:#d8d8d8;transform:translateX(-50%);">0:15</div><div class="r" style="left:749.22px;top:766.5px;width:1.00px;height:5.50px;background:#7a7a7a;"></div><div class="t" style="left:749.72px;top:756.56px;font-size:10.2px;line-height:10.2px;color:#d8d8d8;transform:translateX(-50%);">0:20</div><div class="r" style="left:848.3px;top:766.5px;width:1.00px;height:5.50px;background:#7a7a7a;"></div><div class="t" style="left:848.80px;top:756.56px;font-size:10.2px;line-height:10.2px;color:#d8d8d8;transform:translateX(-50%);">0:25</div><div class="r" style="left:947.38px;top:766.5px;width:1.00px;height:5.50px;background:#7a7a7a;"></div><div class="t" style="left:947.88px;top:756.56px;font-size:10.2px;line-height:10.2px;color:#d8d8d8;transform:translateX(-50%);">0:30</div><div class="r" style="left:1046.46px;top:766.5px;width:1.00px;height:5.50px;background:#505050;"></div><div class="t" style="left:1046.96px;top:756.56px;font-size:10.2px;line-height:10.2px;color:#808080;transform:translateX(-50%);">0:35</div><div class="r" style="left:1145.54px;top:766.5px;width:1.00px;height:5.50px;background:#505050;"></div><div class="t" style="left:1146.04px;top:756.56px;font-size:10.2px;line-height:10.2px;color:#808080;transform:translateX(-50%);">0:40</div><div class="r" style="left:1244.62px;top:766.5px;width:1.00px;height:5.50px;background:#505050;"></div><div class="t" style="left:1245.12px;top:756.56px;font-size:10.2px;line-height:10.2px;color:#808080;transform:translateX(-50%);">0:45</div></div><div class="r" style="left:948px;top:736px;width:1.00px;height:258.00px;background:#4a4a4a;"></div><div class="r" style="left:353px;top:788px;width:595.50px;height:18.50px;background:#64b3e8;"></div><div class="r" style="left:948.5px;top:788px;width:298.00px;height:18.50px;background:#4d8ab5;"></div><div class="r" style="left:377px;top:766px;width:2.20px;height:228.00px;background:#4a8fe0;"></div><svg class="r" style="left:372.5px;top:757.5px;" width="12" height="15" viewBox="0 0 12 15"><path d="M0.5 0.5 H11.5 V6.8 L6 13.8 L0.5 6.8 Z" fill="#4a90e2"/><path d="M4.6 7.2 H7.4 L6.6 8.2 V13 H5.4 V8.2 Z" fill="#1e3048"/></svg><div class="r" style="left:3px;top:994px;width:1261.00px;height:17.00px;background:#232323;"></div><div class="r" style="left:353px;top:994px;width:696.00px;height:17.00px;background:#1b1b1b;"></div><div class="r" style="left:3px;top:994px;width:346.00px;height:1.00px;background:#151515;"></div><div class="r" style="left:354px;top:995.6px;width:95.00px;height:14.40px;background:#313131;border-radius:7px;"></div><svg class="r" style="left:1050px;top:995px;" width="15" height="14" viewBox="0 0 15 14"><g fill="#c8c8c8"><path d="M9 0.8 H14 V5.8 Z"/><path d="M1 13.2 V8.2 H6 Z"/></g><path d="M12.5 2.3 L9 5.8 M2.5 11.7 L6 8.2" stroke="#c8c8c8" stroke-width="1.5"/></svg><svg class="r" style="left:1075px;top:998.5px;" width="13" height="8" viewBox="0 0 13 8"><path d="M0.5 7.2 L4.5 3.2 L6 4.2 L8 1.5 L12.5 7.2 Z" fill="#c4c4c4"/></svg><div class="r" style="left:1102px;top:1002.8px;width:111.00px;height:1.80px;background:#545454;border-radius:1px;"></div><svg class="r" style="left:1142.5px;top:996.5px;" width="14" height="14" viewBox="0 0 14 14"><circle cx="7" cy="7" r="5" fill="#1d1d1d" stroke="#bdbdbd" stroke-width="2"/></svg><svg class="r" style="left:1224px;top:997px;" width="19" height="11" viewBox="0 0 19 11"><path d="M0.5 9.8 L5.5 4 L6.8 5.2 L1.8 9.8 Z M3.5 9.8 L10.5 1 L18 9.8 Z" fill="#c4c4c4"/></svg><div class="t" style="left:1279.70px;top:66.69px;font-size:11px;line-height:11px;color:#dcdcdc;">Camera &amp; Microphone</div><svg class="r" style="left:1399.5px;top:67.6px;" width="10" height="9" viewBox="0 0 10 9"><g fill="#c8c8c8"><rect x="0" y="0.2" width="8.5" height="1.6"/><rect x="0" y="3.4" width="8.5" height="1.6"/><rect x="0" y="6.6" width="8.5" height="1.6"/></g></svg><div class="r" style="left:1269.6px;top:225px;width:97.80px;height:21.50px;background:#1b1b1b;border:1px solid #2c2c2c;border-radius:3px;box-sizing:border-box;"></div><div class="t" style="left:1318.50px;top:231.06px;font-size:10.8px;line-height:10.8px;color:#a8a8a8;transform:translateX(-50%);">Calibrate</div><svg class="r" style="left:1373px;top:227px;" width="14" height="16" viewBox="0 0 14 16"><circle cx="7" cy="6" r="5.2" fill="#cfcfcf"/><circle cx="7" cy="6" r="1.8" fill="#1f1f1f"/><path d="M1 15 C1.5 12 3.5 11 7 11 C10.5 11 12.5 12 13 15 Z" fill="#cfcfcf"/></svg><svg class="r" style="left:1396px;top:227px;" width="12" height="16" viewBox="0 0 12 16"><g fill="#5f5f5f"><circle cx="6" cy="2" r="1.7"/><path d="M3.6 4.6 H8.4 L11 10 L9.8 10.6 L8.3 7.5 V15.5 H6.9 V10.5 H5.1 V15.5 H3.7 V7.5 L2.2 10.6 L1 10 Z"/></g></svg><svg class="r" style="left:1417px;top:227px;" width="12" height="16" viewBox="0 0 12 16"><rect x="3.2" y="0.8" width="5.6" height="10" rx="2.8" fill="#cfcfcf"/><path d="M1.3 7 C1.3 10.5 3 12.2 6 12.2 C9 12.2 10.7 10.5 10.7 7" fill="none" stroke="#cfcfcf" stroke-width="1.4"/><path d="M6 12 V14.5 M2.8 15 H9.2" stroke="#cfcfcf" stroke-width="1.4"/></svg><div class="t" style="left:1279.70px;top:260.79px;font-size:11px;line-height:11px;color:#dcdcdc;">Properties</div><svg class="r" style="left:1339.9px;top:261.7px;" width="10" height="9" viewBox="0 0 10 9"><g fill="#c8c8c8"><rect x="0" y="0.2" width="8.5" height="1.6"/><rect x="0" y="3.4" width="8.5" height="1.6"/><rect x="0" y="6.6" width="8.5" height="1.6"/></g></svg><div class="r" style="left:1587.5px;top:966px;width:12.50px;height:45.00px;background:#1f1f1f;"></div><div class="r" style="left:1588.4px;top:280.4px;width:9.60px;height:686.20px;background:#2d2d2d;border-radius:5px;"></div><div class="r" style="left:1269px;top:285.2px;width:318.20px;height:20.60px;background:#4b4670;"></div><svg class="r" style="left:1277.5px;top:288px;" width="11" height="13" viewBox="0 0 11 13"><g transform="scale(1.0)" fill="#c8c8c8"><circle cx="5" cy="2.2" r="1.8"/><path d="M3.8 4.8 H6.2 L9.5 12.3 H0.5 Z"/></g></svg><div class="t" style="left:1298.00px;top:289.97px;font-size:12.2px;line-height:12.2px;color:#ececec;">dude-2</div><div class="r" style="left:1274.4px;top:308px;width:307.10px;height:18.00px;background:#171717;border:1px solid #2d2d2d;border-radius:3px;box-sizing:border-box;"></div><svg class="r" style="left:1278.5px;top:311.5px;" width="14" height="13" viewBox="0 0 14 13"><circle cx="8.5" cy="5" r="3.9" fill="none" stroke="#d6d6d6" stroke-width="1.6"/><path d="M5.8 7.8 L1.3 12" stroke="#d6d6d6" stroke-width="2" stroke-linecap="round"/></svg><div class="r" style="left:1269px;top:329.2px;width:318.20px;height:18.40px;background:#3b3b3b;"></div><svg class="r" style="left:1272.5px;top:334px;" width="10" height="7" viewBox="0 0 10 7"><path d="M1 1.3 L4.6 4.9 L8.2 1.3" fill="none" stroke="#cfcfcf" stroke-width="1.4"/></svg><div class="t" style="left:1288.70px;top:333.97px;font-size:10.9px;line-height:10.9px;color:#dcdcdc;">Puppet Track Behaviors</div><svg class="r" style="left:1527px;top:331.5px;" width="14" height="13" viewBox="0 0 14 13"><g fill="#c8c8c8"><circle cx="4.5" cy="2" r="1.7"/><path d="M3.4 4.4 H5.6 L8.6 11.8 H0.4 Z"/><path d="M10.8 11 V5.5" stroke="#c8c8c8" stroke-width="1.6"/><path d="M8 6.5 L10.8 3.2 L13.6 6.5 Z"/></g></svg><svg class="r" style="left:1272px;top:359.7px;" width="15" height="11" viewBox="0 0 15 11"><path d="M0.4 5 Q7 -2.6 13.6 5 Q7 12.6 0.4 5 Z" fill="#cfcfcf"/><circle cx="6.6" cy="4.9" r="2.6" fill="#141414"/><circle cx="7.4" cy="4.2" r="0.7" fill="#cfcfcf" opacity="0.6"/></svg><svg class="r" style="left:1292px;top:357.7px;" width="12" height="12" viewBox="0 0 12 12"><circle cx="6" cy="5.8" r="5" fill="#e64a42"/></svg><svg class="r" style="left:1311.5px;top:359.0px;" width="8" height="12" viewBox="0 0 8 12"><path d="M1.5 1.8 L5.2 5.5 L1.5 9.2" fill="none" stroke="#cfcfcf" stroke-width="1.4"/></svg><div class="t" style="left:1331.60px;top:360.22px;font-size:11.2px;line-height:11.2px;color:#dedede;">Dragger</div><svg class="r" style="left:1529.4px;top:361.0px;" width="10" height="9" viewBox="0 0 10 9"><g fill="#c8c8c8"><rect x="0" y="0.2" width="8.5" height="1.6"/><rect x="0" y="3.4" width="8.5" height="1.6"/><rect x="0" y="6.6" width="8.5" height="1.6"/></g></svg><div class="r" style="left:1269px;top:381.9px;width:268.00px;height:1.00px;background:#1b1b1b;"></div><svg class="r" style="left:1272px;top:394.3px;" width="15" height="11" viewBox="0 0 15 11"><path d="M0.4 5 Q7 -2.6 13.6 5 Q7 12.6 0.4 5 Z" fill="#cfcfcf"/><circle cx="6.6" cy="4.9" r="2.6" fill="#141414"/><circle cx="7.4" cy="4.2" r="0.7" fill="#cfcfcf" opacity="0.6"/></svg><svg class="r" style="left:1292px;top:392.3px;" width="12" height="12" viewBox="0 0 12 12"><circle cx="6" cy="5.8" r="5" fill="#e64a42"/></svg><svg class="r" style="left:1311.5px;top:393.6px;" width="8" height="12" viewBox="0 0 8 12"><path d="M1.5 1.8 L5.2 5.5 L1.5 9.2" fill="none" stroke="#cfcfcf" stroke-width="1.4"/></svg><div class="t" style="left:1331.60px;top:394.82px;font-size:11.2px;line-height:11.2px;color:#dedede;">Eye Gaze</div><svg class="r" style="left:1529.4px;top:395.6px;" width="10" height="9" viewBox="0 0 10 9"><g fill="#c8c8c8"><rect x="0" y="0.2" width="8.5" height="1.6"/><rect x="0" y="3.4" width="8.5" height="1.6"/><rect x="0" y="6.6" width="8.5" height="1.6"/></g></svg><div class="r" style="left:1269px;top:416.5px;width:268.00px;height:1.00px;background:#1b1b1b;"></div><svg class="r" style="left:1272px;top:429.2px;" width="15" height="11" viewBox="0 0 15 11"><path d="M0.4 5 Q7 -2.6 13.6 5 Q7 12.6 0.4 5 Z" fill="#cfcfcf"/><circle cx="6.6" cy="4.9" r="2.6" fill="#141414"/><circle cx="7.4" cy="4.2" r="0.7" fill="#cfcfcf" opacity="0.6"/></svg><svg class="r" style="left:1292px;top:427.2px;" width="12" height="12" viewBox="0 0 12 12"><circle cx="6" cy="5.8" r="5" fill="#e64a42"/></svg><svg class="r" style="left:1311.5px;top:428.5px;" width="8" height="12" viewBox="0 0 8 12"><path d="M1.5 1.8 L5.2 5.5 L1.5 9.2" fill="none" stroke="#cfcfcf" stroke-width="1.4"/></svg><div class="t" style="left:1331.60px;top:429.72px;font-size:11.2px;line-height:11.2px;color:#dedede;">Face</div><svg class="r" style="left:1529.4px;top:430.5px;" width="10" height="9" viewBox="0 0 10 9"><g fill="#c8c8c8"><rect x="0" y="0.2" width="8.5" height="1.6"/><rect x="0" y="3.4" width="8.5" height="1.6"/><rect x="0" y="6.6" width="8.5" height="1.6"/></g></svg><div class="r" style="left:1269px;top:450.9px;width:268.00px;height:1.00px;background:#1b1b1b;"></div><svg class="r" style="left:1272px;top:463.6px;" width="15" height="11" viewBox="0 0 15 11"><path d="M0.4 5 Q7 -2.6 13.6 5 Q7 12.6 0.4 5 Z" fill="#cfcfcf"/><circle cx="6.6" cy="4.9" r="2.6" fill="#141414"/><circle cx="7.4" cy="4.2" r="0.7" fill="#cfcfcf" opacity="0.6"/></svg><svg class="r" style="left:1292px;top:461.6px;" width="12" height="12" viewBox="0 0 12 12"><circle cx="6" cy="5.8" r="5" fill="#e64a42"/></svg><svg class="r" style="left:1311.5px;top:462.90000000000003px;" width="8" height="12" viewBox="0 0 8 12"><path d="M1.5 1.8 L5.2 5.5 L1.5 9.2" fill="none" stroke="#cfcfcf" stroke-width="1.4"/></svg><div class="t" style="left:1331.60px;top:464.12px;font-size:11.2px;line-height:11.2px;color:#dedede;">Lip Sync</div><svg class="r" style="left:1529.4px;top:464.90000000000003px;" width="10" height="9" viewBox="0 0 10 9"><g fill="#c8c8c8"><rect x="0" y="0.2" width="8.5" height="1.6"/><rect x="0" y="3.4" width="8.5" height="1.6"/><rect x="0" y="6.6" width="8.5" height="1.6"/></g></svg><div class="r" style="left:1269px;top:485.8px;width:268.00px;height:1.00px;background:#1b1b1b;"></div><svg class="r" style="left:1272px;top:498.0px;" width="15" height="11" viewBox="0 0 15 11"><path d="M0.4 5 Q7 -2.6 13.6 5 Q7 12.6 0.4 5 Z" fill="#cfcfcf"/><circle cx="6.6" cy="4.9" r="2.6" fill="#141414"/><circle cx="7.4" cy="4.2" r="0.7" fill="#cfcfcf" opacity="0.6"/></svg><svg class="r" style="left:1292px;top:496.0px;" width="12" height="12" viewBox="0 0 12 12"><circle cx="6" cy="5.6" r="3.5" fill="#6a2f2b"/></svg><svg class="r" style="left:1311.5px;top:497.3px;" width="8" height="12" viewBox="0 0 8 12"><path d="M1.5 1.8 L5.2 5.5 L1.5 9.2" fill="none" stroke="#cfcfcf" stroke-width="1.4"/></svg><div class="t" style="left:1331.60px;top:498.52px;font-size:11.2px;line-height:11.2px;color:#dedede;">Physics</div><svg class="r" style="left:1529.4px;top:499.3px;" width="10" height="9" viewBox="0 0 10 9"><g fill="#c8c8c8"><rect x="0" y="0.2" width="8.5" height="1.6"/><rect x="0" y="3.4" width="8.5" height="1.6"/><rect x="0" y="6.6" width="8.5" height="1.6"/></g></svg><div class="r" style="left:1269px;top:520.2px;width:268.00px;height:1.00px;background:#1b1b1b;"></div><svg class="r" style="left:1272px;top:533.1px;" width="15" height="11" viewBox="0 0 15 11"><path d="M0.4 5 Q7 -2.6 13.6 5 Q7 12.6 0.4 5 Z" fill="#cfcfcf"/><circle cx="6.6" cy="4.9" r="2.6" fill="#141414"/><circle cx="7.4" cy="4.2" r="0.7" fill="#cfcfcf" opacity="0.6"/></svg><svg class="r" style="left:1292px;top:531.1px;" width="12" height="12" viewBox="0 0 12 12"><circle cx="6" cy="5.6" r="3.5" fill="#6a2f2b"/></svg><svg class="r" style="left:1311.5px;top:532.4px;" width="12" height="12" viewBox="0 0 12 12"><path d="M1.5 3.5 L5.2 7.2 L8.9 3.5" fill="none" stroke="#cfcfcf" stroke-width="1.4"/></svg><div class="t" style="left:1331.60px;top:533.62px;font-size:11.2px;line-height:11.2px;color:#dedede;">Transform</div><svg class="r" style="left:1529.4px;top:534.4px;" width="10" height="9" viewBox="0 0 10 9"><g fill="#c8c8c8"><rect x="0" y="0.2" width="8.5" height="1.6"/><rect x="0" y="3.4" width="8.5" height="1.6"/><rect x="0" y="6.6" width="8.5" height="1.6"/></g></svg><div class="t" style="left:1331.60px;top:556.37px;font-size:10.9px;line-height:10.9px;color:#a8a8a8;">Anchor Point X</div><div class="t" style="left:1536.50px;top:556.37px;font-size:10.9px;line-height:10.9px;color:#4b93e6;transform:translateX(-100%);">0</div><div class="t" style="left:1331.60px;top:576.97px;font-size:10.9px;line-height:10.9px;color:#a8a8a8;">Anchor Point Y</div><div class="t" style="left:1536.50px;top:576.97px;font-size:10.9px;line-height:10.9px;color:#4b93e6;transform:translateX(-100%);">0</div><div class="t" style="left:1331.60px;top:597.87px;font-size:10.9px;line-height:10.9px;color:#a8a8a8;">Position X</div><div class="t" style="left:1536.50px;top:597.87px;font-size:10.9px;line-height:10.9px;color:#4b93e6;transform:translateX(-100%);">0</div><div class="t" style="left:1331.60px;top:618.47px;font-size:10.9px;line-height:10.9px;color:#a8a8a8;">Position Y</div><div class="t" style="left:1536.50px;top:618.47px;font-size:10.9px;line-height:10.9px;color:#4b93e6;transform:translateX(-100%);">0</div><div class="t" style="left:1331.60px;top:639.27px;font-size:10.9px;line-height:10.9px;color:#a8a8a8;">Scale</div><div class="t" style="left:1536.80px;top:639.27px;font-size:10.9px;line-height:10.9px;color:#a8a8a8;transform:translateX(-100%);">%</div><div class="t" style="left:1522.00px;top:639.27px;font-size:10.9px;line-height:10.9px;color:#4b93e6;transform:translateX(-100%);">100</div><div class="t" style="left:1331.60px;top:660.17px;font-size:10.9px;line-height:10.9px;color:#a8a8a8;">Scale X</div><div class="t" style="left:1536.80px;top:660.17px;font-size:10.9px;line-height:10.9px;color:#a8a8a8;transform:translateX(-100%);">%</div><div class="t" style="left:1522.00px;top:660.17px;font-size:10.9px;line-height:10.9px;color:#4b93e6;transform:translateX(-100%);">100</div><div class="t" style="left:1331.60px;top:680.77px;font-size:10.9px;line-height:10.9px;color:#a8a8a8;">Scale Y</div><div class="t" style="left:1536.80px;top:680.77px;font-size:10.9px;line-height:10.9px;color:#a8a8a8;transform:translateX(-100%);">%</div><div class="t" style="left:1522.00px;top:680.77px;font-size:10.9px;line-height:10.9px;color:#4b93e6;transform:translateX(-100%);">100</div><div class="t" style="left:1331.60px;top:701.57px;font-size:10.9px;line-height:10.9px;color:#c4c4c4;">Rotation</div><div class="t" style="left:1537.50px;top:701.57px;font-size:10.9px;line-height:10.9px;color:#a8a8a8;transform:translateX(-100%);">°</div><div class="t" style="left:1530.50px;top:701.57px;font-size:10.9px;line-height:10.9px;color:#4b93e6;transform:translateX(-100%);">0</div><div class="t" style="left:1331.60px;top:722.87px;font-size:10.9px;line-height:10.9px;color:#4d4d4d;">Handle Strength</div><div class="t" style="left:1536.80px;top:722.87px;font-size:10.9px;line-height:10.9px;color:#4d4d4d;transform:translateX(-100%);">%</div><div class="t" style="left:1522.00px;top:722.87px;font-size:10.9px;line-height:10.9px;color:#4d4d4d;transform:translateX(-100%);">100</div><div class="t" style="left:1331.60px;top:743.47px;font-size:10.9px;line-height:10.9px;color:#c4c4c4;">Opacity</div><div class="t" style="left:1536.80px;top:743.47px;font-size:10.9px;line-height:10.9px;color:#a8a8a8;transform:translateX(-100%);">%</div><div class="t" style="left:1522.00px;top:743.47px;font-size:10.9px;line-height:10.9px;color:#4b93e6;transform:translateX(-100%);">100</div><div class="t" style="left:1331.60px;top:764.67px;font-size:10.9px;line-height:10.9px;color:#4d4d4d;">Group Opacity</div><svg class="r" style="left:1478px;top:696px;" width="20" height="20" viewBox="0 0 20 20"><circle cx="10" cy="9.8" r="8.2" fill="none" stroke="#c4c4c4" stroke-width="1.6"/><path d="M10 1.5 V9.8" stroke="#c4c4c4" stroke-width="1.6"/></svg><div class="r" style="left:1524.6px;top:761.3px;width:13.80px;height:13.70px;background:transparent;border:1.5px solid #4e4e4e;border-radius:2px;box-sizing:border-box;"></div><div class="r" style="left:1269px;top:788.5px;width:268.00px;height:1.00px;background:#1b1b1b;"></div><svg class="r" style="left:1272px;top:801.1px;" width="15" height="11" viewBox="0 0 15 11"><path d="M0.4 5 Q7 -2.6 13.6 5 Q7 12.6 0.4 5 Z" fill="#cfcfcf"/><circle cx="6.6" cy="4.9" r="2.6" fill="#141414"/><circle cx="7.4" cy="4.2" r="0.7" fill="#cfcfcf" opacity="0.6"/></svg><svg class="r" style="left:1292px;top:799.1px;" width="12" height="12" viewBox="0 0 12 12"><circle cx="6" cy="5.8" r="5" fill="#e64a42"/></svg><svg class="r" style="left:1311.5px;top:800.4px;" width="8" height="12" viewBox="0 0 8 12"><path d="M1.5 1.8 L5.2 5.5 L1.5 9.2" fill="none" stroke="#cfcfcf" stroke-width="1.4"/></svg><div class="t" style="left:1331.60px;top:801.62px;font-size:11.2px;line-height:11.2px;color:#dedede;">Triggers</div><svg class="r" style="left:1529.4px;top:802.4px;" width="10" height="9" viewBox="0 0 10 9"><g fill="#c8c8c8"><rect x="0" y="0.2" width="8.5" height="1.6"/><rect x="0" y="3.4" width="8.5" height="1.6"/><rect x="0" y="6.6" width="8.5" height="1.6"/></g></svg><div class="r" style="left:1269px;top:823.3px;width:268.00px;height:1.00px;background:#1b1b1b;"></div><svg class="r" style="left:1272px;top:836.0px;" width="15" height="11" viewBox="0 0 15 11"><path d="M0.4 5 Q7 -2.6 13.6 5 Q7 12.6 0.4 5 Z" fill="#cfcfcf"/><circle cx="6.6" cy="4.9" r="2.6" fill="#141414"/><circle cx="7.4" cy="4.2" r="0.7" fill="#cfcfcf" opacity="0.6"/></svg><svg class="r" style="left:1292px;top:834.0px;" width="12" height="12" viewBox="0 0 12 12"><circle cx="6" cy="5.8" r="5" fill="#e64a42"/></svg><svg class="r" style="left:1311.5px;top:835.3px;" width="8" height="12" viewBox="0 0 8 12"><path d="M1.5 1.8 L5.2 5.5 L1.5 9.2" fill="none" stroke="#cfcfcf" stroke-width="1.4"/></svg><div class="t" style="left:1331.60px;top:836.52px;font-size:11.2px;line-height:11.2px;color:#dedede;">Walk</div><svg class="r" style="left:1529.4px;top:837.3px;" width="10" height="9" viewBox="0 0 10 9"><g fill="#c8c8c8"><rect x="0" y="0.2" width="8.5" height="1.6"/><rect x="0" y="3.4" width="8.5" height="1.6"/><rect x="0" y="6.6" width="8.5" height="1.6"/></g></svg><div class="r" style="left:1269px;top:858.2px;width:268.00px;height:1.00px;background:#1b1b1b;"></div><svg class="r" style="left:1272px;top:871.1px;" width="15" height="11" viewBox="0 0 15 11"><path d="M0.4 5 Q7 -2.6 13.6 5 Q7 12.6 0.4 5 Z" fill="#cfcfcf"/><circle cx="6.6" cy="4.9" r="2.6" fill="#141414"/><circle cx="7.4" cy="4.2" r="0.7" fill="#cfcfcf" opacity="0.6"/></svg><svg class="r" style="left:1292px;top:869.1px;" width="12" height="12" viewBox="0 0 12 12"><circle cx="6" cy="5.6" r="3.5" fill="#6a2f2b"/></svg><svg class="r" style="left:1311.5px;top:870.4px;" width="8" height="12" viewBox="0 0 8 12"><path d="M1.5 1.8 L5.2 5.5 L1.5 9.2" fill="none" stroke="#cfcfcf" stroke-width="1.4"/></svg><div class="t" style="left:1331.60px;top:871.62px;font-size:11.2px;line-height:11.2px;color:#dedede;">Wiggler</div><svg class="r" style="left:1529.4px;top:872.4px;" width="10" height="9" viewBox="0 0 10 9"><g fill="#c8c8c8"><rect x="0" y="0.2" width="8.5" height="1.6"/><rect x="0" y="3.4" width="8.5" height="1.6"/><rect x="0" y="6.6" width="8.5" height="1.6"/></g></svg><div class="r" style="left:1269px;top:888px;width:318.20px;height:18.70px;background:#3b3b3b;"></div><svg class="r" style="left:1272.5px;top:893px;" width="10" height="7" viewBox="0 0 10 7"><path d="M1 1.3 L4.6 4.9 L8.2 1.3" fill="none" stroke="#cfcfcf" stroke-width="1.4"/></svg><div class="t" style="left:1288.70px;top:891.97px;font-size:10.9px;line-height:10.9px;color:#dcdcdc;">Replays</div><div class="r" style="left:1269px;top:948.5px;width:318.20px;height:1.00px;background:#1e1e1e;"></div><div class="t" style="left:1288.70px;top:957.96px;font-size:10.8px;line-height:10.8px;color:#4a4a4a;">When Trigger Ends</div><div class="r" style="left:1486.3px;top:955px;width:81.80px;height:17.00px;background:#272727;border-radius:3px;"></div><div class="t" style="left:1493.30px;top:957.96px;font-size:10.8px;line-height:10.8px;color:#4a4a4a;">Let finish</div><svg class="r" style="left:1554px;top:960px;" width="10" height="7" viewBox="0 0 10 7"><path d="M1 1.3 L4.6 4.9 L8.2 1.3" fill="none" stroke="#4a4a4a" stroke-width="1.4"/></svg><div class="t" style="left:1288.70px;top:977.06px;font-size:10.8px;line-height:10.8px;color:#4a4a4a;">Offset:</div><div class="t" style="left:1345.00px;top:977.06px;font-size:10.8px;line-height:10.8px;color:#4a4a4a;">- sec</div><div class="t" style="left:1482.70px;top:977.06px;font-size:10.8px;line-height:10.8px;color:#4a4a4a;">Volume:</div><div class="t" style="left:1546.90px;top:977.06px;font-size:10.8px;line-height:10.8px;color:#4a4a4a;">- dB</div></body></html>
